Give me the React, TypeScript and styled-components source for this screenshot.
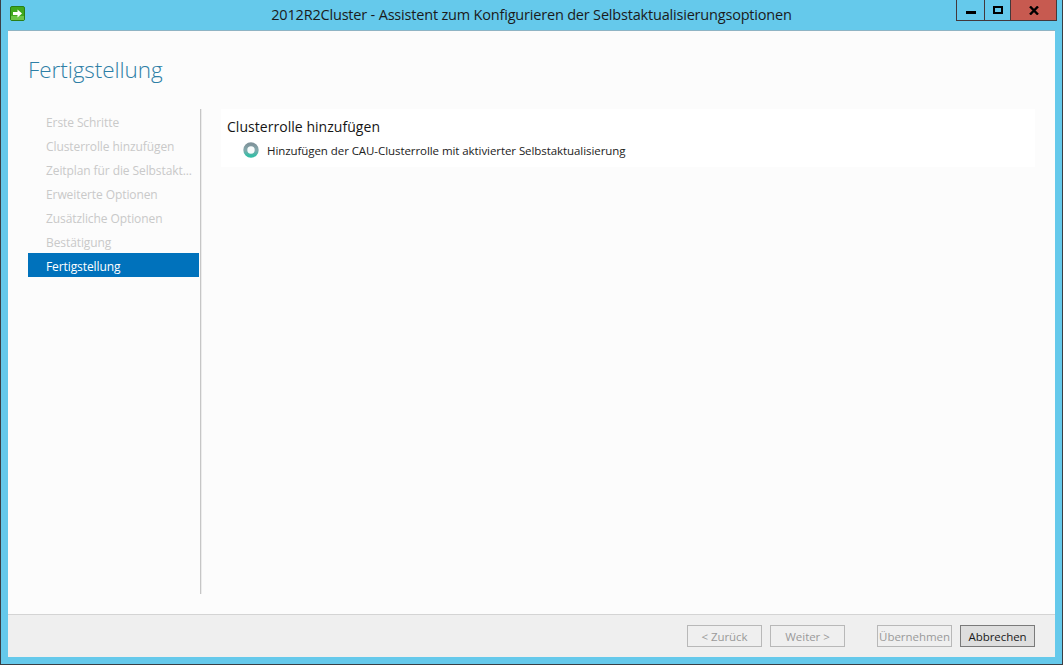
import React from "react";
import styled, { createGlobalStyle } from "styled-components";

const Global = createGlobalStyle`
  html, body { margin: 0; padding: 0; width: 1064px; height: 665px; overflow: hidden; background: #fff; }
  #root { width: 1064px; height: 665px; }
`;

const Frame = styled.div`
  width: 1063px;
  height: 665px;
  box-sizing: border-box;
  display: flex;
  flex-direction: column;
  background: #65c9eb;
  border-left: 1px solid #3a3f45;
  border-right: 1px solid #3a3f45;
  border-bottom: 1px solid #3a3f45;
  font-family: "Open Sans", "Noto Sans", sans-serif;
`;

const TitleBar = styled.div`
  position: relative;
  height: 30px;
  flex: none;
  display: flex;
  align-items: flex-start;
  justify-content: center;
`;

const AppIcon = styled.svg`
  position: absolute;
  left: 9px;
  top: 6px;
`;

const Title = styled.div`
  font-size: 14.5px;
  line-height: 20px;
  margin-top: 5px;
  letter-spacing: -0.19px;
  color: #1b1b1b;
`;

const Caption = styled.div`
  position: absolute;
  right: 5px;
  top: 0;
  display: flex;
  height: 21px;
  box-sizing: border-box;
  border: 1px solid #43383a;
  border-top: none;
`;

const CapButton = styled.div<{ $w: number; $close?: boolean }>`
  width: ${(p) => p.$w}px;
  display: flex;
  align-items: center;
  justify-content: center;
  background: ${(p) => (p.$close ? "#c75a50" : "transparent")};
  & + & { border-left: 1px solid #43383a; }
`;

const Client = styled.div`
  flex: 1;
  margin: 0 7px 7px 7px;
  display: flex;
  flex-direction: column;
  background: #fcfcfc;
  border-top: 1px solid #8fb4c4;
  min-height: 0;
`;

const Heading = styled.h1`
  margin: 0;
  padding: 23px 0 0 20px;
  height: 78px;
  box-sizing: border-box;
  flex: none;
  font-size: 22.5px;
  line-height: 32px;
  font-weight: 300;
  letter-spacing: -0.07px;
  color: #2e7fa6;
`;

const Body = styled.div`
  flex: 1;
  display: flex;
  min-height: 0;
  padding: 0 20px 20px 20px;
`;

const Nav = styled.nav`
  width: 171px;
  flex: none;
  display: flex;
  flex-direction: column;
`;

const NavItem = styled.div<{ $active?: boolean }>`
  height: 24px;
  box-sizing: border-box;
  padding: 4px 0 0 18px;
  line-height: 20px;
  font-size: 12px;
  letter-spacing: -0.09px;
  white-space: nowrap;
  overflow: hidden;
  color: ${(p) => (p.$active ? "#fff" : "#c9c9c9")};
  background: ${(p) => (p.$active ? "#0072bc" : "transparent")};
`;

const Divider = styled.div`
  width: 1px;
  flex: none;
  margin-left: 1px;
  background: #c6c6c6;
  border-right: 1px solid #ececec;
`;

const Content = styled.main`
  flex: 1;
  padding-left: 19px;
  min-width: 0;
`;

const Card = styled.section`
  width: 814px;
  height: 58px;
  box-sizing: border-box;
  background: #fff;
  padding: 8px 0 0 6px;
`;

const CardTitle = styled.div`
  font-size: 14px;
  line-height: 20px;
  letter-spacing: 0.04px;
  color: #151515;
`;

const StatusRow = styled.div`
  display: flex;
  align-items: center;
  height: 24px;
  margin: 1px 0 0 16px;
  gap: 8px;
  font-size: 11.5px;
  letter-spacing: -0.07px;
  color: #222;
`;

const Footer = styled.footer`
  height: 43px;
  flex: none;
  box-sizing: border-box;
  background: #efefef;
  border-top: 1px solid #d4d4d4;
  display: flex;
  align-items: flex-start;
  padding: 10px 20px 0 0;
  justify-content: flex-end;
`;

const Btn = styled.button<{ $w: number; $gap?: number; $primary?: boolean }>`
  width: ${(p) => p.$w}px;
  height: 22px;
  padding: 0;
  margin-left: ${(p) => p.$gap ?? 0}px;
  font-family: inherit;
  font-size: 11.5px;
  letter-spacing: -0.05px;
  white-space: nowrap;
  color: ${(p) => (p.$primary ? "#1a1a1a" : "#9a9a9a")};
  background: ${(p) => (p.$primary ? "#dedede" : "#efefef")};
  border: 1px solid ${(p) => (p.$primary ? "#7a7a7a" : "#b8b8b8")};
  box-sizing: border-box;
`;

export default function App() {
  return (
    <>
      <Global />
      <Frame>
        <TitleBar>
          <AppIcon width="15" height="15" viewBox="0 0 15 15">
            <rect x="0.5" y="0.5" width="14" height="14" rx="1.5" fill="#3fa81e" stroke="#2a7f16" />
            <rect x="1" y="10" width="13" height="4" fill="#6cc648" />
            <path d="M3 6h4.500V3.500L12 7.500l-4.500 4V9H3z" fill="#fff" />
          </AppIcon>
          <Title>2012R2Cluster - Assistent zum Konfigurieren der Selbstaktualisierungsoptionen</Title>
          <Caption>
            <CapButton $w={27}>
              <svg width="10" height="7" viewBox="0 0 10 7"><rect y="4" width="10" height="3" fill="#000" /></svg>
            </CapButton>
            <CapButton $w={25}>
              <svg width="10" height="8" viewBox="0 0 10 8"><rect x="1" y="1" width="8" height="6" fill="none" stroke="#000" strokeWidth="2" /></svg>
            </CapButton>
            <CapButton $w={45} $close>
              <svg width="10" height="9" viewBox="0 0 10 9"><path d="M1 0.500l8 8M9 0.500l-8 8" stroke="#000" strokeWidth="2.400" /></svg>
            </CapButton>
          </Caption>
        </TitleBar>
        <Client>
          <Heading>Fertigstellung</Heading>
          <Body>
            <Nav>
              <NavItem>Erste Schritte</NavItem>
              <NavItem>Clusterrolle hinzufügen</NavItem>
              <NavItem>Zeitplan für die Selbstakt...</NavItem>
              <NavItem>Erweiterte Optionen</NavItem>
              <NavItem>Zusätzliche Optionen</NavItem>
              <NavItem>Bestätigung</NavItem>
              <NavItem $active>Fertigstellung</NavItem>
            </Nav>
            <Divider />
            <Content>
              <Card>
                <CardTitle>Clusterrolle hinzufügen</CardTitle>
                <StatusRow>
                  <svg width="16" height="16" viewBox="0 0 16 16">
                    <defs>
                      <linearGradient id="ring" x1="0" y1="0" x2="0" y2="1">
                        <stop offset="0" stopColor="#7f949b" />
                        <stop offset="0.5" stopColor="#84a9ad" />
                        <stop offset="1" stopColor="#36bda6" />
                      </linearGradient>
                    </defs>
                    <circle cx="8" cy="8" r="5.700" fill="#f6fbfb" stroke="url(#ring)" strokeWidth="4" />
                  </svg>
                  <span>Hinzufügen der CAU-Clusterrolle mit aktivierter Selbstaktualisierung</span>
                </StatusRow>
              </Card>
            </Content>
          </Body>
          <Footer>
            <Btn $w={75} disabled>&lt; Zurück</Btn>
            <Btn $w={75} $gap={8} disabled>Weiter &gt;</Btn>
            <Btn $w={75} $gap={32} disabled>Übernehmen</Btn>
            <Btn $w={75} $gap={8} $primary>Abbrechen</Btn>
          </Footer>
        </Client>
      </Frame>
    </>
  );
}
